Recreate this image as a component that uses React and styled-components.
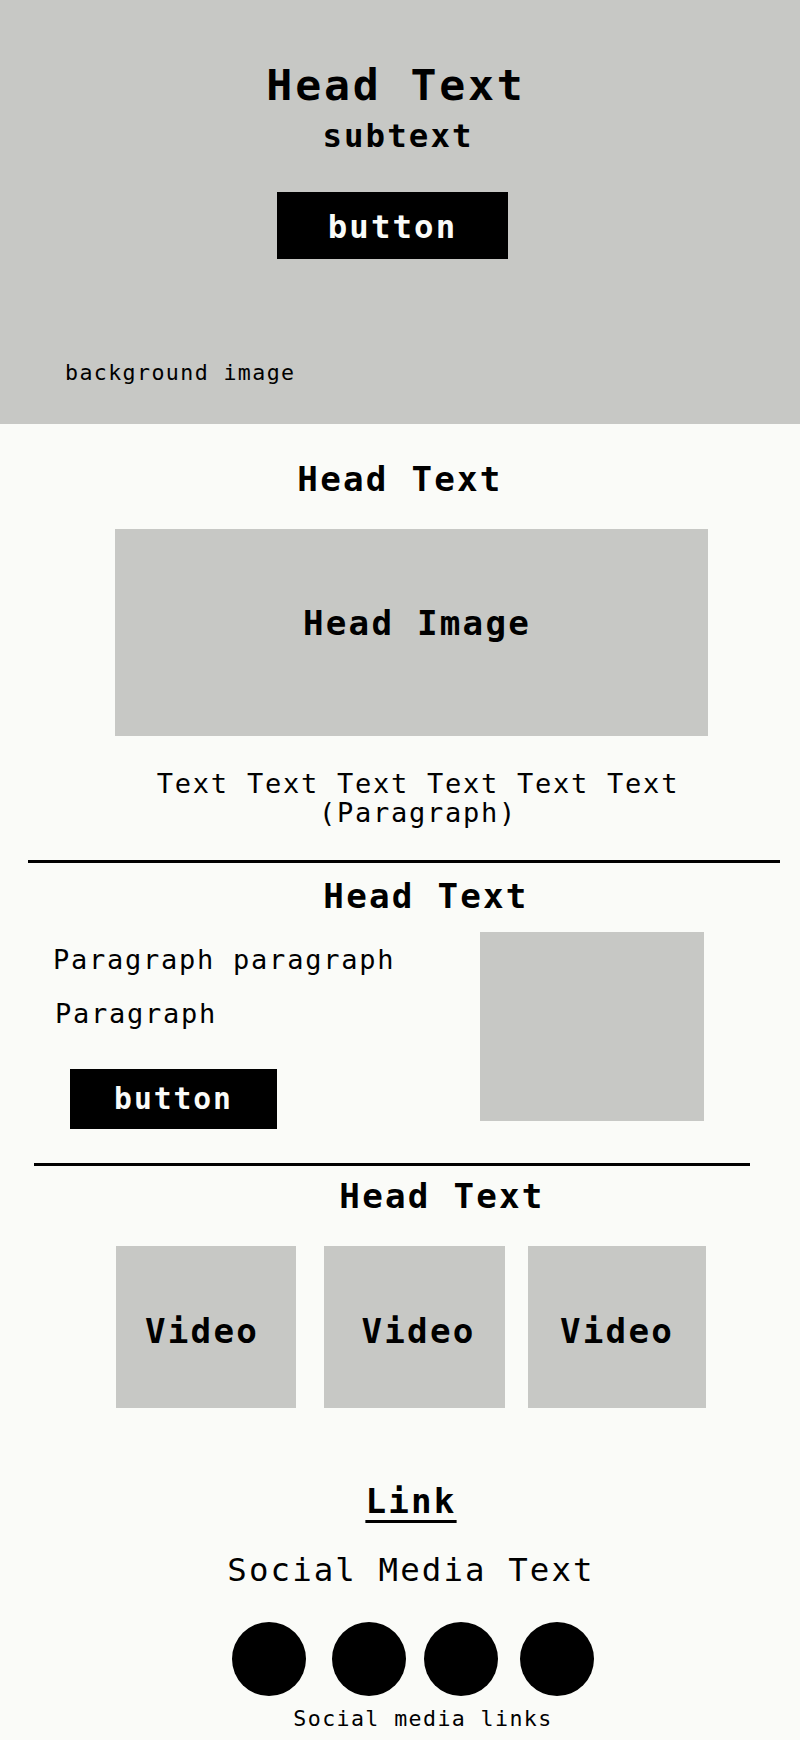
import React from 'react';
import styled, { createGlobalStyle } from 'styled-components';

const GlobalStyle = createGlobalStyle`
  html, body {
    margin: 0;
    padding: 0;
    background: #fafbf8;
  }
  body {
    font-family: "DejaVu Sans Mono", "Liberation Mono", monospace;
    color: #000;
  }
  * {
    box-sizing: border-box;
    letter-spacing: 0.065em;
  }
`;

// nudges a centred block sideways by dx px
const nudge = ({ $dx = 0 }) =>
  $dx > 0 ? `padding-left: ${$dx * 2}px;` : $dx < 0 ? `padding-right: ${-$dx * 2}px;` : '';

const Page = styled.div`
  width: 800px;
  min-height: 1740px;
  background: #fafbf8;
  display: flex;
  flex-direction: column;
`;

const Hero = styled.header`
  height: 424px;
  background: #c7c8c5;
  display: flex;
  flex-direction: column;
  padding-top: 57px;
`;

const HeroTitle = styled.h1`
  margin: 0;
  font-size: 43.2px;
  line-height: 56px;
  font-weight: 700;
  text-align: center;
  ${nudge}
`;

const HeroSub = styled.p`
  margin: 2px 0 0;
  font-size: 32.4px;
  line-height: 42px;
  font-weight: 700;
  text-align: center;
  ${nudge}
`;

const Button = styled.button`
  display: block;
  width: ${({ $w }) => $w}px;
  border: none;
  border-radius: 0;
  background: #000;
  color: #fafbf8;
  font-family: inherit;
  font-weight: 700;
  text-align: center;
  cursor: pointer;
`;

const HeroButton = styled(Button)`
  align-self: center;
  margin: 35px 0 0 -15px;
  padding: 14px 0 11px;
  font-size: 32.4px;
  line-height: 42px;
`;

const HeroCaption = styled.p`
  margin: 100px 0 0 65px;
  font-size: 21.6px;
  line-height: 28px;
`;

const Section = styled.section`
  display: flex;
  flex-direction: column;
  padding-top: ${({ $top }) => $top || 0}px;
`;

const SectionTitle = styled.h2`
  margin: ${({ $mt }) => $mt || 0}px 0 0;
  font-size: 34.2px;
  line-height: 44px;
  font-weight: 700;
  text-align: center;
  ${nudge}
`;

const Placeholder = styled.div`
  background: #c7c8c5;
  display: flex;
  align-items: center;
  justify-content: center;
  font-size: 34.2px;
  line-height: 44px;
  font-weight: 700;
`;

const HeadImage = styled(Placeholder)`
  margin: 28px 0 0 115px;
  width: 593px;
  height: 207px;
  padding: 0 0 20px 11px;
`;

const IntroText = styled.p`
  margin: 33px 0 0 138px;
  width: 560px;
  font-size: 27px;
  line-height: 29px;
  text-align: center;
`;

const Divider = styled.div`
  margin: ${({ $mt }) => $mt}px 0 0 ${({ $left }) => $left}px;
  width: ${({ $w }) => $w}px;
  height: 3px;
  background: #000;
`;

const FeatureRow = styled.div`
  display: flex;
  margin-top: 14px;
`;

const FeatureText = styled.div`
  width: 480px;
  padding: 10px 0 0 53px;
  display: flex;
  flex-direction: column;
  align-items: flex-start;
`;

const Paragraph = styled.p`
  margin: ${({ $mt }) => $mt || 0}px 0 0 ${({ $indent }) => $indent || 0}px;
  font-size: 27px;
  line-height: 36px;
`;

const FeatureButton = styled(Button)`
  margin: 37px 0 0 17px;
  padding: 11px 0 11px;
  font-size: 29.7px;
  line-height: 38px;
`;

const FeatureImage = styled(Placeholder)`
  width: 224px;
  height: 189px;
`;

const VideoRow = styled.div`
  display: flex;
  margin-top: 28px;
  padding-left: 116px;
`;

const VideoBox = styled(Placeholder)`
  width: ${({ $w }) => $w}px;
  height: 162px;
  margin-left: ${({ $ml }) => $ml || 0}px;
  padding-top: 7px;
  ${nudge}
`;

const LinkLine = styled.div`
  margin-top: 71px;
  text-align: center;
  font-size: 34.2px;
  line-height: 44px;
  ${nudge}
`;

const TextLink = styled.a`
  color: #000;
  font-weight: 700;
  text-decoration: underline;
  text-decoration-thickness: 3px;
  text-underline-offset: 7px;
`;

const SocialText = styled.p`
  margin: 26px 0 0;
  font-size: 32.4px;
  line-height: 42px;
  text-align: center;
  ${nudge}
`;

const SocialRow = styled.div`
  display: flex;
  margin-top: 31px;
  padding-left: 232px;
`;

const SocialDot = styled.a`
  display: block;
  width: 74px;
  height: 74px;
  border-radius: 50%;
  background: #000;
  margin-left: ${({ $ml }) => $ml || 0}px;
`;

const SocialCaption = styled.p`
  margin: 9px 0 0;
  font-size: 21.6px;
  line-height: 28px;
  text-align: center;
  ${nudge}
`;

const videos = [
  { w: 180, ml: 0, dx: -4 },
  { w: 181, ml: 28, dx: 4 },
  { w: 178, ml: 23, dx: 0 },
];

const socials = [0, 26, 18, 22];

export default function App() {
  return (
    <>
      <GlobalStyle />
      <Page>
        <Hero>
          <HeroTitle $dx={-4}>Head Text</HeroTitle>
          <HeroSub $dx={-2}>subtext</HeroSub>
          <HeroButton $w={231}>button</HeroButton>
          <HeroCaption>background image</HeroCaption>
        </Hero>

        <Section $top={33}>
          <SectionTitle>Head Text</SectionTitle>
          <HeadImage>Head Image</HeadImage>
          <IntroText>Text Text Text Text Text Text (Paragraph)</IntroText>
        </Section>

        <Divider $mt={33} $left={28} $w={752} />

        <Section>
          <SectionTitle $mt={11} $dx={26}>Head Text</SectionTitle>
          <FeatureRow>
            <FeatureText>
              <Paragraph>Paragraph paragraph</Paragraph>
              <Paragraph $mt={18} $indent={2}>Paragraph</Paragraph>
              <FeatureButton $w={207}>button</FeatureButton>
            </FeatureText>
            <FeatureImage />
          </FeatureRow>
        </Section>

        <Divider $mt={34} $left={34} $w={716} />

        <Section>
          <SectionTitle $mt={8} $dx={42}>Head Text</SectionTitle>
          <VideoRow>
            {videos.map((v, i) => (
              <VideoBox key={i} $w={v.w} $ml={v.ml} $dx={v.dx}>Video</VideoBox>
            ))}
          </VideoRow>
        </Section>

        <Section>
          <LinkLine $dx={11}>
            <TextLink href="#">Link</TextLink>
          </LinkLine>
          <SocialText $dx={11}>Social Media Text</SocialText>
          <SocialRow>
            {socials.map((ml, i) => (
              <SocialDot key={i} href="#" $ml={ml} aria-label="social link" />
            ))}
          </SocialRow>
          <SocialCaption $dx={23}>Social media links</SocialCaption>
        </Section>
      </Page>
    </>
  );
}
